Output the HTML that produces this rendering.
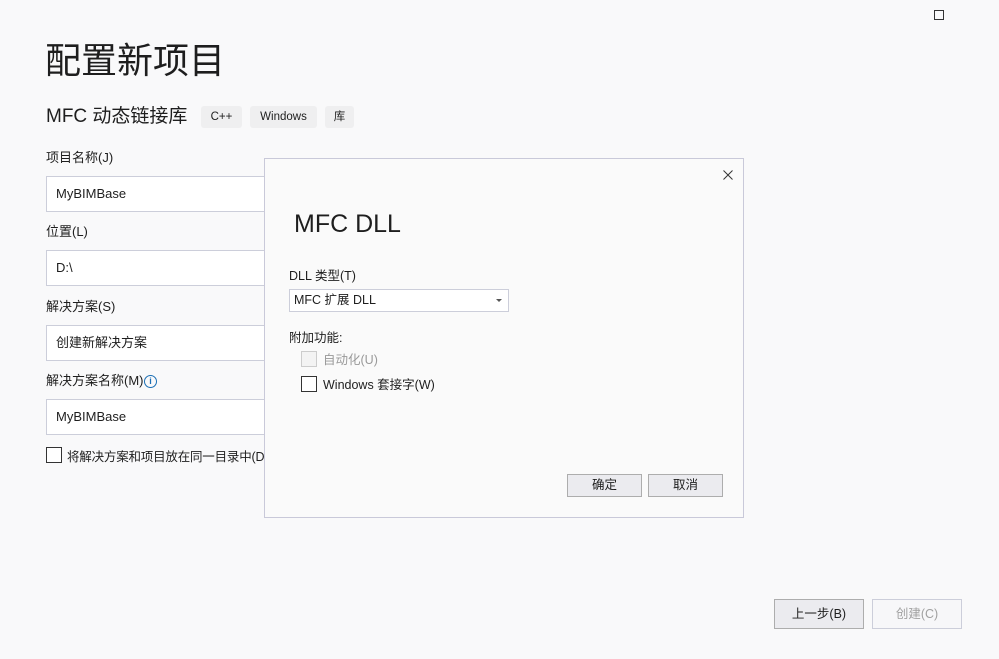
<!DOCTYPE html>
<html><head><meta charset="utf-8"><style>
*{margin:0;padding:0;box-sizing:border-box}
body{width:999px;height:659px;background:#f9f9fa;font-family:"Liberation Sans","Noto Sans CJK SC",sans-serif;color:#1e1e1e;position:relative;overflow:hidden;font-size:13px}
.a{position:absolute;white-space:nowrap}
.inp{position:absolute;left:46px;width:240px;height:36px;background:#fff;border:1px solid #ccceda;padding:0 9px;line-height:34px;font-size:13px}
.tag{position:absolute;top:106px;height:22px;background:#efeff0;border-radius:3px;font-size:11.5px;line-height:22px;text-align:center}
.btn{position:absolute;background:#ebebef;border:1px solid #adadad;text-align:center;font-size:12.5px}
</style></head><body>
<div class="a" style="left:934px;top:10px;width:10px;height:10px;border:1px solid #333"></div>
<div class="a" style="left:45px;top:38px;font-size:36px;line-height:46px">配置新项目</div>
<div class="a" style="left:46px;top:104px;font-size:19px;line-height:26px">MFC 动态链接库</div>
<div class="tag" style="left:201px;width:41px">C++</div>
<div class="tag" style="left:250px;width:67px">Windows</div>
<div class="tag" style="left:325px;width:29px">库</div>
<div class="a" style="left:46px;top:149px;line-height:18px">项目名称(J)</div>
<div class="inp" style="top:176px">MyBIMBase</div>
<div class="a" style="left:46px;top:223px;line-height:18px">位置(L)</div>
<div class="inp" style="top:250px">D:\</div>
<div class="a" style="left:46px;top:298px;line-height:18px">解决方案(S)</div>
<div class="inp" style="top:325px">创建新解决方案</div>
<div class="a" style="left:46px;top:372px;line-height:18px">解决方案名称(M)</div>
<div class="a" style="left:144px;top:375px;width:13px;height:13px;border:1.5px solid #1b6fb5;border-radius:50%;color:#1b6fb5;font-size:9px;font-weight:bold;text-align:center;line-height:10px">i</div>
<div class="inp" style="top:399px">MyBIMBase</div>
<div class="a" style="left:46px;top:447px;width:16px;height:16px;border:1px solid #333;background:#fff"></div>
<div class="a" style="left:67px;top:448px;line-height:18px;font-size:12.5px;letter-spacing:-0.2px">将解决方案和项目放在同一目录中(D)</div>

<div class="a" style="left:264px;top:158px;width:480px;height:360px;background:#fafafa;border:1px solid #c9c9d9">
<svg class="a" style="left:457px;top:10px" width="12" height="12" viewBox="0 0 12 12"><path d="M1.5 1.5L10.5 10.5M10.5 1.5L1.5 10.5" stroke="#333" stroke-width="1"/></svg>
<div class="a" style="left:29px;top:50px;font-size:25px;line-height:30px">MFC DLL</div>
<div class="a" style="left:24px;top:108px;line-height:18px;font-size:12.5px">DLL 类型(T)</div>
<div class="a" style="left:24px;top:130px;width:220px;height:23px;background:#fff;border:1px solid #ccceda;padding-left:4px;line-height:21px;font-size:12.5px">MFC 扩展 DLL<span style="position:absolute;right:6px;top:9px;border:3px solid transparent;border-top:3px solid #555"></span></div>
<div class="a" style="left:24px;top:170px;line-height:18px;font-size:12.5px">附加功能:</div>
<div class="a" style="left:36px;top:192px;width:16px;height:16px;border:1px solid #ccc;background:#f3f3f3"></div>
<div class="a" style="left:58px;top:192px;line-height:18px;font-size:12.5px;color:#999">自动化(U)</div>
<div class="a" style="left:36px;top:217px;width:16px;height:16px;border:1px solid #333;background:#fff"></div>
<div class="a" style="left:58px;top:217px;line-height:18px;font-size:12.5px">Windows 套接字(W)</div>
<div class="btn" style="left:302px;top:315px;width:75px;height:23px;line-height:21px">确定</div>
<div class="btn" style="left:383px;top:315px;width:75px;height:23px;line-height:21px">取消</div>
</div>

<div class="btn" style="left:774px;top:599px;width:90px;height:30px;line-height:28px">上一步(B)</div>
<div class="btn" style="left:872px;top:599px;width:90px;height:30px;line-height:28px;background:#f7f7f9;border-color:#ccceda;color:#a0a0a0">创建(C)</div>
</body></html>
